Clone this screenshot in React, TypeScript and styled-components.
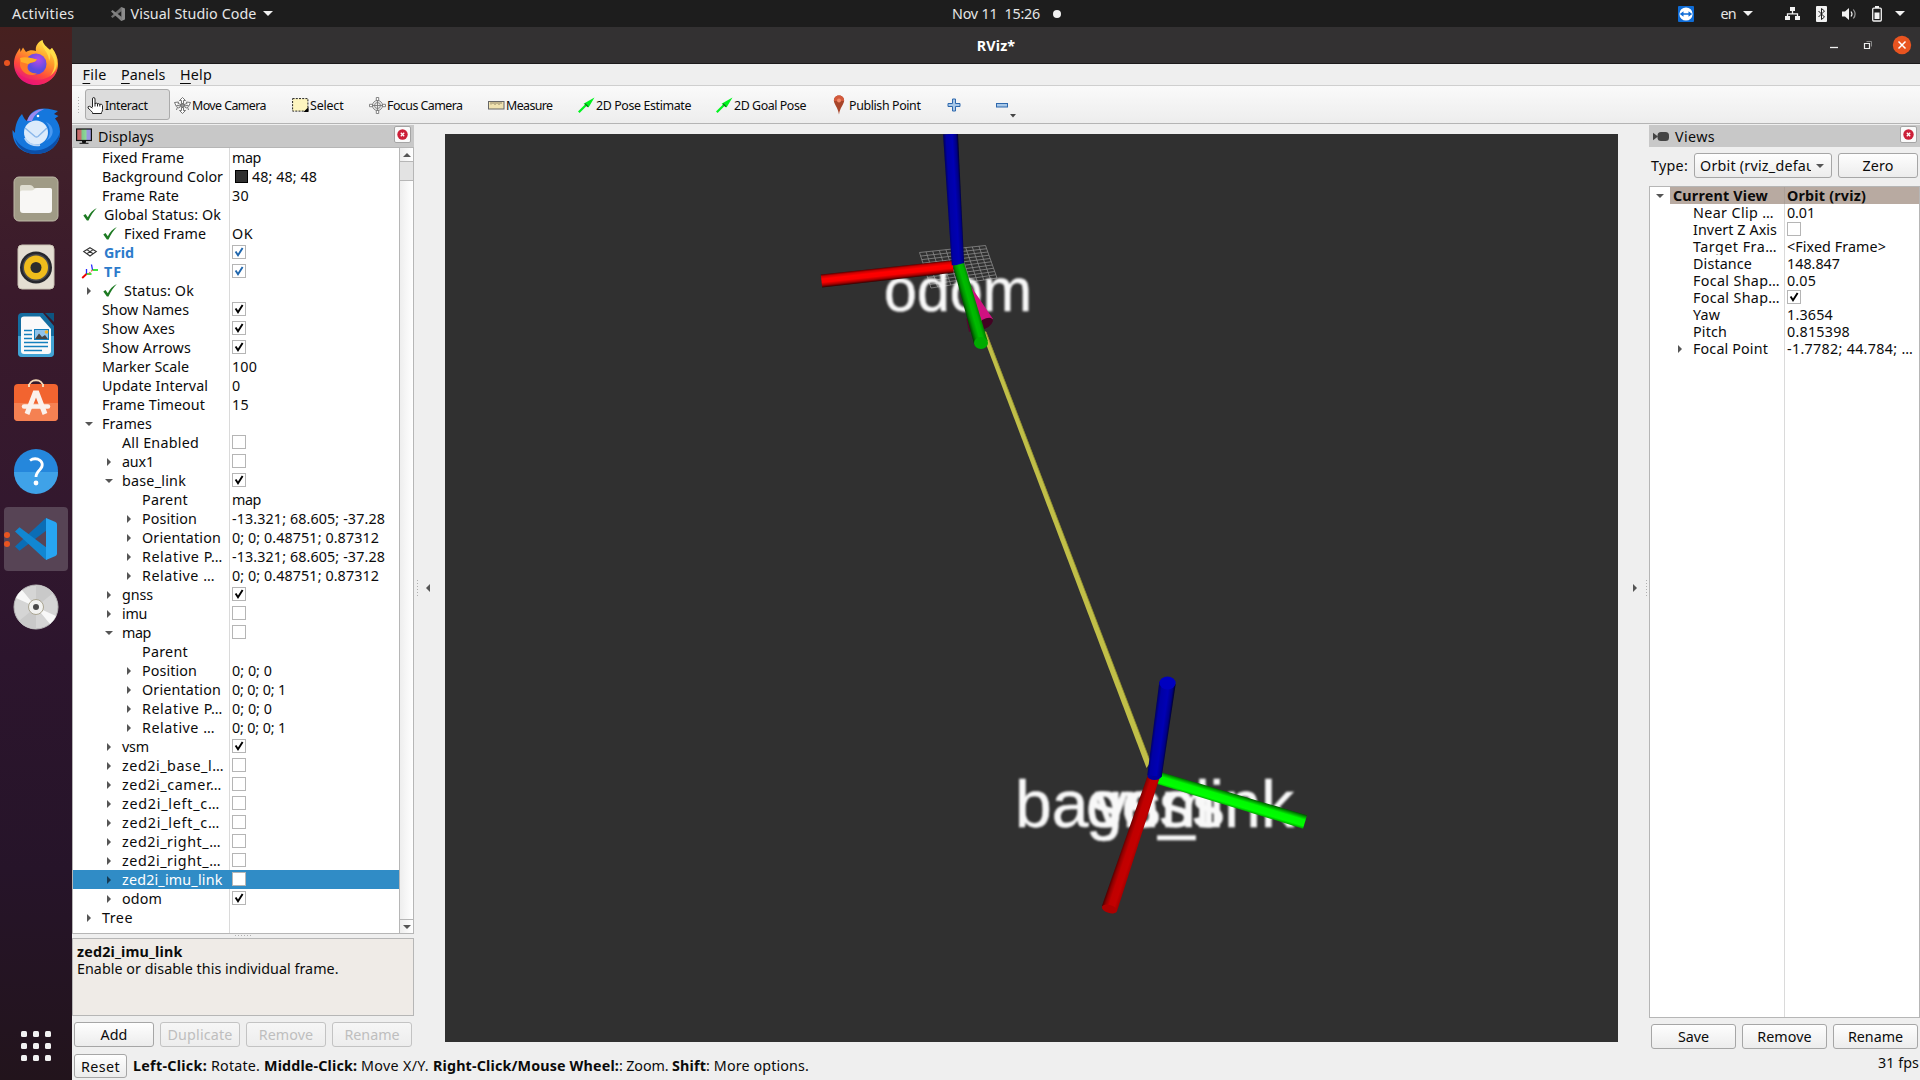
import React, { useLayoutEffect, useRef, useState } from "react";
import styled, { createGlobalStyle, css } from "styled-components";

const Global = createGlobalStyle`
  *, *::before, *::after { box-sizing: border-box; }
  body {
    margin: 0;
    overflow: hidden;
    background: #efefef;
    font-family: "Noto Sans", "Open Sans", sans-serif;
    font-size: 14.3px;
    line-height: 19px;
    color: #0b0b0b;
  }
  svg { display: block; flex: none; overflow: visible; }
`;

/* ---------- text tracked to a given advance width ---------- */
const FitSpan = styled.span<{ $bold?: boolean }>`
  display: inline-block;
  flex: none;
  white-space: pre;
  ${(p) => p.$bold && css`font-weight: 700;`}
`;

function Fit({ children, w, bold }: { children: React.ReactNode; w?: number; bold?: boolean }) {
  const ref = useRef<HTMLSpanElement>(null);
  const [spacing, setSpacing] = useState(0);
  useLayoutEffect(() => {
    const el = ref.current;
    if (!el || !w) return;
    const length = el.textContent?.length || 1;
    setSpacing((w - el.getBoundingClientRect().width) / length);
  }, [w]);
  return (
    <FitSpan ref={ref} $bold={bold} style={{ letterSpacing: spacing }}>
      {children}
    </FitSpan>
  );
}

/* ---------- desktop shell ---------- */
const Desktop = styled.div`
  width: 1920px;
  height: 1080px;
  display: flex;
  flex-direction: column;
`;
const TopBar = styled.header`
  height: 27px;
  background: #1d1d1d;
  color: #e6e6e6;
  display: grid;
  grid-template-columns: 1fr auto 1fr;
  align-items: center;
  flex: none;
`;
const TopLeft = styled.div`
  display: flex;
  align-items: center;
  padding-left: 12px;
`;
const AppMenu = styled.div`
  display: flex;
  align-items: center;
  gap: 6px;
  margin-left: 36px;
`;
const Clock = styled.div`
  display: flex;
  align-items: center;
  gap: 13px;
  margin-left: 93px;
`;
const Dot = styled.i`
  width: 8px;
  height: 8px;
  border-radius: 50%;
  background: #f2f2f2;
`;
const Tray = styled.div`
  display: flex;
  align-items: center;
  justify-content: flex-end;
  padding-right: 15px;
`;
const TrayItem = styled.div<{ $gap: number }>`
  margin-left: ${(p) => p.$gap}px;
  display: flex;
  align-items: center;
  gap: 7px;
`;
const Body = styled.div`
  flex: 1;
  display: flex;
  min-height: 0;
`;
const Dock = styled.nav`
  width: 72px;
  flex: none;
  padding-top: 4px;
  display: flex;
  flex-direction: column;
  align-items: center;
  gap: 4px;
  background: linear-gradient(#47201f 0, #40202a 12%, #3a1a2b 25%, #33182e 45%, #2c152d 60%, #261429 80%, #22141c 100%);
`;
const DockItem = styled.div<{ $active?: boolean; $dots?: number }>`
  position: relative;
  width: 64px;
  height: 64px;
  border-radius: 4px;
  display: flex;
  align-items: center;
  justify-content: center;
  background: ${(p) => (p.$active ? "#574455" : "transparent")};
`;
const Running = styled.div`
  position: absolute;
  left: 0;
  top: 0;
  height: 64px;
  display: flex;
  flex-direction: column;
  justify-content: center;
  gap: 3px;
`;
const RunDot = styled.i`
  width: 6px;
  height: 6px;
  border-radius: 50%;
  background: #e95420;
`;
const AppGrid = styled.div`
  margin-top: auto;
  margin-bottom: 19px;
  display: grid;
  grid-template-columns: repeat(3, 6px);
  grid-auto-rows: 6px;
  gap: 6px;
`;
const AppCell = styled.i`
  background: #f2f2f2;
  border-radius: 1.5px;
`;

/* ---------- window ---------- */
const Window = styled.main`
  flex: 1;
  display: flex;
  flex-direction: column;
  background: #efefef;
  min-width: 0;
`;
const TitleBar = styled.div`
  height: 37px;
  flex: none;
  background: #333132;
  border-bottom: 1px solid #1c1a1b;
  color: #fff;
  display: grid;
  grid-template-columns: 1fr auto 1fr;
  align-items: center;
`;
const WindowButtons = styled.div`
  display: flex;
  align-items: center;
  justify-content: flex-end;
  padding-right: 8px;
`;
const MenuBar = styled.div`
  height: 22px;
  flex: none;
  border-bottom: 1px solid #cfcfcf;
  display: flex;
  gap: 14.5px;
  padding-left: 10.5px;
  align-items: center;
`;
const Mnemonic = styled.u`
  text-decoration-thickness: 1px;
  text-underline-offset: 3px;
`;
const ToolBar = styled.div`
  height: 38px;
  flex: none;
  display: flex;
  align-items: center;
  padding-left: 5px;
  background: linear-gradient(#fafafa, #ededed);
  border-bottom: 1px solid #b4b4b4;
  font-size: 12.4px;
`;
const Grip = styled.div<{ $w: number; $h: number }>`
  width: ${(p) => p.$w}px;
  height: ${(p) => p.$h}px;
  flex: none;
  background-image: radial-gradient(circle, #b0b0b0 0.7px, transparent 1px);
  background-size: 3px 3px;
`;
const Tool = styled.div<{ $w: number; $on?: boolean }>`
  width: ${(p) => p.$w}px;
  height: 31px;
  display: flex;
  align-items: center;
  gap: 1px;
  padding-left: 2px;
  padding-top: 1px;
  border-radius: 3px;
  flex: none;
  ${(p) => p.$on && css`background: #dcdcdc; border: 1px solid #ababab; width: 85px; margin: 0 2px 0 4px; padding-left: 1px;`}
`;
const Workspace = styled.div`
  height: 926px;
  flex: none;
  display: flex;
  padding-top: 1px;
`;
const DockPanel = styled.section<{ $w: number }>`
  width: ${(p) => p.$w}px;
  display: flex;
  flex-direction: column;
  flex: none;
`;
const PanelHeader = styled.div`
  height: 22px;
  flex: none;
  background: #c8c8c8;
  display: flex;
  align-items: center;
  gap: 6px;
  padding: 0 3px 0 4px;
`;
const PanelClose = styled.div`
  margin-left: auto;
  margin-bottom: 3px;
  width: 17px;
  height: 17px;
  border: 1px solid #a5a5a5;
  border-radius: 2px;
  background: #fafafa;
  display: flex;
  align-items: center;
  justify-content: center;
`;
const TreeFrame = styled.div<{ $h: number }>`
  height: ${(p) => p.$h}px;
  flex: none;
  background: #fff;
  border: 1px solid #b6b6b6;
  display: flex;
  overflow: hidden;
`;
const Rows = styled.div<{ $name: number }>`
  flex: 1;
  min-width: 0;
  background: linear-gradient(#dadada, #dadada) no-repeat ${(p) => p.$name}px 0 / 1px 100%;
`;
const Row = styled.div<{ $h: number; $selected?: boolean }>`
  height: ${(p) => p.$h}px;
  display: flex;
  align-items: center;
  ${(p) => p.$selected && css`background: #308cc6; color: #fff;`}
`;
const NameCell = styled.div<{ $w: number; $x: number; $shade?: boolean }>`
  width: ${(p) => p.$w}px;
  height: 100%;
  padding-left: ${(p) => p.$x}px;
  flex: none;
  display: flex;
  align-items: center;
  overflow: hidden;
  ${(p) => p.$shade && css`background: linear-gradient(#b8aaa1, #b8aaa1) no-repeat 20px 0;`}
`;
const ValueCell = styled.div<{ $shade?: boolean }>`
  flex: 1;
  height: 100%;
  padding-left: 3px;
  display: flex;
  align-items: center;
  ${(p) => p.$shade && css`background: #b8aaa1; border-left: 1px solid #aca097; padding-left: 2px;`}
`;
const Expander = styled.span`
  width: 20px;
  margin-left: -23px;
  margin-right: 3px;
  display: flex;
  justify-content: center;
  flex: none;
`;
const RowIcon = styled.span`
  width: 22px;
  padding-left: 1px;
  margin-bottom: 1px;
  flex: none;
`;
const Blue = styled.span`
  color: #2c7bcb;
`;
const Box = styled.span`
  width: 14px;
  height: 14px;
  margin-bottom: 1px;
  border: 1px solid #b5b5b5;
  background: #fff;
  display: flex;
  align-items: center;
  justify-content: center;
`;
const Swatch = styled.span`
  width: 13px;
  height: 13px;
  margin: 0 4px 0 3px;
  background: #303030;
  border: 1px solid #000;
`;
const ScrollBar = styled.div`
  width: 14px;
  border-left: 1px solid #b6b6b6;
  background: linear-gradient(90deg, #eee, #fff);
  display: flex;
  flex-direction: column;
`;
const ScrollArrow = styled.div<{ $end?: boolean }>`
  height: 14px;
  display: flex;
  align-items: center;
  justify-content: center;
  ${(p) => (p.$end ? css`margin-top: auto; border-top: 1px solid #b6b6b6;` : css`border-bottom: 1px solid #b6b6b6;`)}
`;
const Thumb = styled.div`
  height: 19px;
  background: #e3e3e3;
  border-bottom: 1px solid #b6b6b6;
`;
const HSplit = styled.div`
  height: 4px;
  flex: none;
  display: flex;
  align-items: flex-start;
  justify-content: center;
`;
const HelpBox = styled.div`
  height: 78px;
  flex: none;
  border: 1px solid #b6b6b6;
  background: #efebe7;
  padding: 4px 4px;
  line-height: 17px;
  display: flex;
  flex-direction: column;
  align-items: flex-start;
`;
const ButtonRow = styled.div<{ $top: number }>`
  margin-top: ${(p) => p.$top}px;
  padding: 0 2px;
  display: flex;
  justify-content: space-between;
`;
const Button = styled.button<{ $w: number; $h?: number }>`
  width: ${(p) => p.$w}px;
  height: ${(p) => p.$h ?? 25}px;
  padding: 0;
  border: 1px solid #a6a6a6;
  border-radius: 3px;
  background: linear-gradient(#fefefe, #ececec);
  font: inherit;
  color: inherit;
  flex: none;
  display: flex;
  align-items: center;
  justify-content: center;
  &:disabled { color: #bebebe; border-color: #c3c3c3; background: linear-gradient(#f6f6f6, #ededed); }
`;
const VSplit = styled.div<{ $w: number; $before: number; $gap: number }>`
  width: ${(p) => p.$w}px;
  flex: none;
  display: flex;
  align-items: center;
  gap: ${(p) => p.$gap}px;
  padding-left: ${(p) => p.$before}px;
`;
const Viewport = styled.div`
  width: 1173px;
  height: 908px;
  margin-top: 9px;
  flex: none;
  background: #303030;
  overflow: hidden;
`;
const TypeRow = styled.div`
  height: 37px;
  margin-bottom: 2px;
  flex: none;
  display: flex;
  align-items: center;
  padding: 0 2px;
`;
const Select = styled.div`
  width: 138px;
  height: 25px;
  margin: 0 6px 0 auto;
  border: 1px solid #a6a6a6;
  border-radius: 3px;
  background: linear-gradient(#fefefe, #ececec);
  display: flex;
  align-items: center;
  justify-content: space-between;
  padding: 0 7px 0 5px;
`;
const SelectText = styled.span`
  width: 111px;
  overflow: hidden;
  display: flex;
`;
const StatusBar = styled.footer`
  flex: 1;
  display: flex;
  align-items: flex-start;
  padding: 4px 1px 0 2px;
`;
const Hint = styled.div`
  padding: 2px 0 0 6px;
  flex: 1;
  display: flex;
`;
const Fps = styled.div`
  margin-top: -1px;
`;

/* ---------- small icons ---------- */
const Tri = ({ dir = "down", color = "#555", w = 7, h = 4 }: { dir?: string; color?: string; w?: number; h?: number }) => {
  const d: Record<string, string> = {
    down: `M0 0H${w}L${w / 2} ${h}Z`,
    up: `M0 ${h}H${w}L${w / 2} 0Z`,
    right: `M0 0V${h}L${w} ${h / 2}Z`,
    left: `M${w} 0V${h}L0 ${h / 2}Z`,
  };
  return (
    <svg width={w} height={h}>
      <path d={d[dir]} fill={color} />
    </svg>
  );
};
const Check = ({ color = "#000" }: { color?: string }) => (
  <svg width="10" height="10" viewBox="0 0 10 10">
    <path d="M1.6 4.6 4 8.3 8.6 1" fill="none" stroke={color} strokeWidth="1.9" />
  </svg>
);
const OkMark = () => (
  <svg width="14" height="13" viewBox="0 0 14 13">
    <path d="M.3 7.400 2.500 6 4.800 9.200C7 5 9.600 2.200 13.800 0 10.400 3.600 8 7 5.500 12.600L3.900 12.600Z" fill="#1d7a22" />
  </svg>
);
const GridMark = () => (
  <svg width="14" height="10" viewBox="0 0 14 10">
    <path d="M7 .7 13.300 4.500 7 9 .7 4.500ZM3.800 2.600 10.200 6.800M10.200 2.600 3.800 6.800" fill="none" stroke="#333" strokeWidth="1.100" />
  </svg>
);
const TfMark = () => (
  <svg width="17" height="15" viewBox="0 0 17 15">
    <g fill="none" strokeWidth="1.300">
      <path d="M3.500 10V5M9.500 6 8.500 .5" stroke="#22f" />
      <path d="M3.500 10h5M9.500 6h5.500" stroke="#0d0" />
      <path d="M3.500 10-.8 14" stroke="#e00" strokeWidth="1.800" />
      <path d="m9.500 6-4.500 4.500" stroke="#e55" strokeDasharray="2 1" />
    </g>
  </svg>
);
const RedX = () => (
  <svg width="11" height="11" viewBox="0 0 11 11">
    <circle cx="5.500" cy="5.500" r="5.200" fill="#cc1f38" />
    <path d="m3.800 3.800 3.400 3.400m0-3.400L3.800 7.200" stroke="#fff" strokeWidth="1.300" />
  </svg>
);
const Monitor = () => (
  <svg width="16" height="16" viewBox="0 0 16 16">
    <defs>
      <linearGradient id="mon">
        <stop offset=".3" stopColor="#c66b6b" />
        <stop offset=".36" stopColor="#7fc78a" />
        <stop offset=".64" stopColor="#8fd79a" />
        <stop offset=".7" stopColor="#9a97e0" />
      </linearGradient>
    </defs>
    <rect x=".6" y="1" width="14.800" height="11.500" fill="url(#mon)" stroke="#111" strokeWidth="1.200" />
    <path d="M6.500 12.500h3v2h-3zM3.500 15.300h9" stroke="#111" fill="#111" />
  </svg>
);
const Camcorder = () => (
  <svg width="16" height="9" viewBox="0 0 16 9">
    <path d="M0 .8 5 4.500 0 8.200Z" fill="#444" />
    <rect x="4.500" y="0" width="11.500" height="9" rx="3.500" fill="#444" />
  </svg>
);
const VsShape = ({ size, mono }: { size: number; mono?: boolean }) => (
  <svg width={size} height={size} viewBox="0 0 42 42">
    <path d="M0 28.500 4.500 32.800 32 12V0Q31 0 29.800 1Z" fill={mono ? "#6f6f6f" : "#0b6db5"} />
    <path d="M0 13.500 4.500 9.200 32 30V42Q31 42 29.800 41Z" fill={mono ? "#828282" : "#1187d2"} />
    <path d="M31 0 40.500 4Q42 4.800 42 6.500V35.500Q42 37.200 40.500 38L31 42Z" fill={mono ? "#8c8c8c" : "#27a5f2"} />
  </svg>
);

/* ---------- toolbar icons ---------- */
const Hand = () => (
  <svg width="17" height="17" viewBox="0 0 17 17">
    <path d="M5.500 10V2q0-1.500 1.200-1.500T8 2v4.500q2-.8 2.500.3 1.700-.6 2.200.5 2.500-.6 2.800 1.200v4q0 2-1 3v1H5.500v-1Q4 13.500 1 11q-.3-2 1.500-1.700L5.500 11" fill="#fff" stroke="#222" strokeWidth="1" />
    <path d="M8 6v3.500m2.500-3v3m2.300-2.500v2.500" stroke="#222" />
  </svg>
);
const MoveCam = () => (
  <svg width="17" height="17" viewBox="0 0 17 17">
    <g fill="#fff" stroke="#666" strokeWidth=".9">
      <path d="m8.500.5 3 3h-2v3.200h-2V3.500h-2ZM8.500 16.500l3-3h-2v-3h-2v3h-2Z" />
      <path d="M.5 5.500 4.500 5 4 6.500l3 1-1 1.500-3-.8-.6 1.300ZM16.500 5.500l-4-.5.5 1.500-3 1 1 1.500 3-.8.6 1.300Z" />
      <path d="m2.500 13 1-3 1.200 1 2-1.500M14.500 13l-1-3-1.200 1-2-1.500" />
      <circle cx="8.500" cy="8.500" r="1.800" fill="#999" />
    </g>
  </svg>
);
const SelectIcon = () => (
  <svg width="17" height="14" viewBox="0 0 17 14">
    <rect x=".6" y=".6" width="15.300" height="12.500" fill="#fdf5bf" stroke="#222" strokeDasharray="2 1.200" />
    <path d="M16.500 9v5h-5Z" fill="#000" />
  </svg>
);
const Focus = () => (
  <svg width="17" height="17" viewBox="0 0 17 17">
    <g fill="#fff" stroke="#777" strokeWidth=".9">
      <path d="M7.300.5h2.400v3H7.300ZM7.300 13.500h2.400v3H7.300ZM.5 7.300h3v2.400h-3ZM13.500 7.300h3v2.400h-3Z" />
      <circle cx="8.500" cy="8.500" r="5" fill="none" />
      <circle cx="8.500" cy="8.500" r="3" fill="#eee" />
      <path d="M8.500 4v9M4 8.500h9" />
    </g>
  </svg>
);
const Ruler = () => (
  <svg width="17" height="9" viewBox="0 0 17 9">
    <rect x=".5" y=".5" width="15.500" height="7.500" fill="#f0e2b0" stroke="#666" />
    <path d="M3 1v2.500M5 1v2M7 1v3M9 1v2M11 1v3M13 1v2" stroke="#7a6f55" strokeWidth=".8" />
  </svg>
);
const GreenArrow = () => (
  <svg width="17" height="16" viewBox="0 0 17 16">
    <path d="M.8 15.200 9 7" stroke="#00f41e" strokeWidth="2.200" />
    <path d="M16.500.5 10.500 10.500 8.500 8 5.500 6.800Z" fill="#00f41e" />
    <path d="m7 6.800 3 3" stroke="#0a7a18" strokeWidth="1.400" />
  </svg>
);
const Pin = () => (
  <svg width="16" height="20" viewBox="0 0 16 20">
    <path d="M7 .5C10.500 .5 12.300 3 12.100 6 11.800 9.500 8 12.500 7 19.500 6 12.500 2.200 9.500 1.900 6 1.700 3 3.500 .5 7 .5Z" fill="#a8452a" />
    <path d="M7 .5C10.500 .5 12.300 3 12.100 6H1.900C1.700 3 3.500 .5 7 .5Z" fill="#d35a3c" />
    <circle cx="7" cy="5.500" r="2" fill="#f08a6a" />
  </svg>
);
const Plus = () => (
  <svg width="16" height="16" viewBox="0 0 16 16">
    <path d="M6.500 2h3v4.500H14v3H9.500V14h-3V9.500H2v-3h4.500Z" fill="#a8c8e8" stroke="#2e68ad" />
  </svg>
);
const Minus = () => (
  <svg width="20" height="20" viewBox="0 0 20 20">
    <rect x="3.500" y="8.500" width="11" height="3.500" fill="#a8c8e8" stroke="#2e68ad" />
    <path d="M17 19h6l-3 3.500Z" fill="#444" />
  </svg>
);

/* ---------- dock icons ---------- */
const Firefox = () => (
  <svg width="46" height="48" viewBox="0 0 46 48">
    <defs>
      <linearGradient id="ff" x1=".8" y1="0" x2=".3" y2="1">
        <stop offset="0" stopColor="#fff44f" />
        <stop offset=".4" stopColor="#ff9a2a" />
        <stop offset=".7" stopColor="#ff4a3c" />
        <stop offset="1" stopColor="#e0108a" />
      </linearGradient>
      <radialGradient id="ffp" cx=".6" cy=".3">
        <stop offset="0" stopColor="#b84ae8" />
        <stop offset="1" stopColor="#5a4de0" />
      </radialGradient>
    </defs>
    <path d="M23 46C10 46 1 36 1 24.500 1 18 4 13 7 9L7.500 13 10 8.500 13 13C16 11 20 11 23 12 22 7 25 3 29.500 1 30 6 34 8 37 11L39 9C43 14 45 19 45 25 45 37 35 46 23 46Z" fill="url(#ff)" />
    <path d="M1.500 28C4 39 12 45 23 46 34 46 43 38 44.500 29 40 37 33 41 23 41 13 41 5 36 1.500 28Z" fill="#f0146c" opacity=".55" />
    <circle cx="23" cy="25" r="10.500" fill="url(#ffp)" />
    <path d="M7 19C12 17 18 19 24 20.500 22 24 17 23 15 26 13 31 18 34.500 24 34.500 16 39 8 33 7 26Z" fill="#ff7a28" />
    <path d="M7 19C12 17 18 19 24 20.500 22 24 17 23 15 25L8 23Z" fill="#ffae28" />
    <path d="M29.500 1C27 9 36 12 36 22 38 18 37 16 37 14 43 20 43 30 37 37 46 30 46 20 39 9L37 11C34 8 30 6 29.500 1Z" fill="#ffe24a" opacity=".85" />
  </svg>
);
const Thunderbird = () => (
  <svg width="48" height="47" viewBox="0 0 48 47">
    <path d="M24 46C10 46 0 37 .5 22L3 25C3 17 6 10 10 6 12 10 13 12 15 13 17 5 24 .5 32 .5 38 .5 42 2 46 3L42 6 46.500 8 43 10.500C46.500 14 48 19 48 24 48 37 37 46 24 46Z" fill="#1577dd" />
    <path d="M3 30C8 40 18 44 28 42 38 40 46 32 48 24 48 37 37 46 24 46 13 46 5 40 3 30Z" fill="#0c4fa8" />
    <path d="M15 13C18 4 26 1 32 1 26 4 22 7 20 13Z" fill="#9a8af0" />
    <circle cx="24" cy="24.500" r="12" fill="#dcebfb" />
    <path d="M13 20 23 28.500Q24.500 29.500 26 28.500L35 20" fill="none" stroke="#89b7ea" strokeWidth="1.500" />
    <path d="M13 30C15 36 22 38 28 37" fill="none" stroke="#b9d6f6" strokeWidth="2" />
    <path d="M34 33C39 28 39 20 34 14 42 17 44 28 34 33Z" fill="#4a9af2" />
    <circle cx="26" cy="8" r="1.300" fill="#fff" />
  </svg>
);
const Files = () => (
  <svg width="46" height="46" viewBox="0 0 46 46">
    <rect x="1" y="1" width="44" height="44" rx="5" fill="#a09b86" stroke="#bdb8a6" />
    <path d="M7 14V11Q7 9 9 9H17Q19 9 20 10.500L21 12H36Q39 12 39 15V20H7Z" fill="#dfddd0" />
    <path d="M7 20V16Q7 14.500 9 14.500H18Q20 14.500 21 13.500 22 12 24 12H37Q39 12 39 14V34Q39 37 36 37H10Q7 37 7 34Z" fill="#f8f7f5" />
  </svg>
);
const Speaker = () => (
  <svg width="38" height="46" viewBox="0 0 38 46">
    <rect x="1" y="1" width="36" height="44" rx="4" fill="#e4ded2" stroke="#c9c2b4" />
    <circle cx="19" cy="23.500" r="16" fill="#26272c" />
    <circle cx="19" cy="23.500" r="13.500" fill="#4a4b50" />
    <circle cx="19" cy="23.500" r="12" fill="#f0bd1c" />
    <circle cx="19" cy="23.500" r="5.500" fill="#2d2d2d" />
  </svg>
);
const Writer = () => (
  <svg width="38" height="46" viewBox="0 0 38 46">
    <path d="M5 1H26L37 14V41Q37 45 33 45H5Q1 45 1 41V5Q1 1 5 1Z" fill="#146da0" />
    <path d="M1 24H37V41Q37 45 33 45H5Q1 45 1 41Z" fill="#42a3d4" />
    <path d="M28 1H37V10Z" fill="#0d5480" />
    <path d="M7 4.500H23L34 17V39Q34 42 31 42H7Q4 42 4 39V7Q4 4.500 7 4.500Z" fill="#fafafa" />
    <path d="M7 18.500H15M7 22.500H15M7 26.500H15M7 30.500H31M7 34.500H31M7 38.500H25" stroke="#1480bd" strokeWidth="1.600" />
    <rect x="17.500" y="17.500" width="14" height="10" fill="#8fc3ea" stroke="#1480bd" />
    <path d="M18 27 22 21.500 25 25 28 23 31 27Z" fill="#444" />
    <circle cx="29.500" cy="20" r="1.800" fill="#f3b52a" />
  </svg>
);
const Software = () => (
  <svg width="46" height="50" viewBox="0 0 46 50">
    <path d="M16 9C16 0 30 0 30 9" fill="none" stroke="#f5d9b8" strokeWidth="2" />
    <rect x="1" y="6" width="44" height="37" rx="4" fill="#f26430" />
    <path d="M1 25H45V39Q45 43 41 43H5Q1 43 1 39Z" fill="#f58152" />
    <path d="M16 9V6M30 9V6" stroke="#f5d9b8" strokeWidth="2" />
    <path d="M14 36 22 15H24L32 36" fill="none" stroke="#fbf1ec" strokeWidth="5" />
    <path d="M11 28.500H35" stroke="#fbf1ec" strokeWidth="4.500" strokeLinecap="round" />
  </svg>
);
const Help = () => (
  <svg width="46" height="46" viewBox="0 0 46 46">
    <circle cx="23" cy="23" r="22" fill="#2587dc" />
    <path d="M1 24H45A22 22 0 0 1 1 24Z" fill="#3fa2e8" />
    <path d="M17 12.500C19 11 22 10.300 25 11.200 30 13 30.500 18 27 21.500 24.500 24 23 25.500 23 29" fill="none" stroke="#fff" strokeWidth="2.800" />
    <circle cx="23" cy="35" r="2.400" fill="#fff" />
  </svg>
);
const Disc = () => (
  <svg width="46" height="46" viewBox="0 0 46 46">
    <circle cx="23" cy="23" r="22" fill="#d5d5d5" stroke="#b9b9b9" />
    <path d="M23 23 3 14A22 22 0 0 1 9 6ZM23 23 43 32A22 22 0 0 1 37 40Z" fill="#f8f8f8" />
    <path d="M23 23 23 1A22 22 0 0 1 40 9ZM23 23 23 45A22 22 0 0 1 6 37Z" fill="#c9c9c9" />
    <circle cx="23" cy="23" r="7.500" fill="#f2f2f0" stroke="#aaa592" />
    <circle cx="23" cy="23" r="3" fill="#4a4a4a" />
  </svg>
);

/* ---------- tray ---------- */
const TeamViewer = () => (
  <svg width="16" height="16" viewBox="0 0 16 16">
    <rect width="16" height="16" rx="1" fill="#0f6cd6" />
    <circle cx="8" cy="8" r="6.600" fill="#fff" />
    <path d="M1.800 8 5.500 5.300V7.200h5V5.300L14.200 8l-3.700 2.700V8.800h-5v1.900Z" fill="#0f6cd6" />
  </svg>
);
const Network = () => (
  <svg width="15" height="14" viewBox="0 0 15 14">
    <path d="M5 0h5v4H5ZM0 9h5v4H0ZM10 9h5v4h-5Z" fill="#f2f2f2" />
    <path d="M7.500 4v3M2.500 9V6.800h10V9" fill="none" stroke="#f2f2f2" strokeWidth="1.300" />
  </svg>
);
const Bluetooth = () => (
  <svg width="11" height="16" viewBox="0 0 11 16">
    <rect width="11" height="16" rx="1" fill="#f2f2f2" />
    <path d="m2.500 5 6 6-3 2.500v-11l3 2.500-6 6" fill="none" stroke="#1d1d1d" />
  </svg>
);
const Volume = () => (
  <svg width="15" height="14" viewBox="0 0 15 14">
    <path d="M0 4.500h3L7 1v12L3 9.500H0Z" fill="#f2f2f2" />
    <path d="M9 4.500q2 2.500 0 5" fill="none" stroke="#f2f2f2" strokeWidth="1.200" />
    <path d="M11.300 2.500q3.600 4.500 0 9" fill="none" stroke="#9a9a9a" strokeWidth="1.200" />
  </svg>
);
const Battery = () => (
  <svg width="10" height="16" viewBox="0 0 10 16">
    <path d="M3 0h4v2H3Z" fill="#f2f2f2" />
    <rect x=".7" y="2.200" width="8.600" height="12.800" rx="1" fill="none" stroke="#f2f2f2" strokeWidth="1.300" />
    <rect x="2.500" y="6.500" width="5" height="6.500" fill="#f2f2f2" />
  </svg>
);
const WinControls = () => (
  <svg width="82" height="20" viewBox="0 0 82 20">
    <path d="M0 12.500h8" stroke="#f0f0f0" strokeWidth="1.300" />
    <path d="M34.500 8.500h5v5h-5Z" fill="none" stroke="#eee" strokeWidth="1.200" />
    <path d="M36.500 6.500h5v5" fill="none" stroke="#888" />
    <circle cx="72" cy="10" r="9.200" fill="#e95420" />
    <path d="m68.500 6.500 7 7m0-7-7 7" stroke="#fff" strokeWidth="1.500" />
  </svg>
);

/* ---------- 3D scene ---------- */
type P = [number, number];
const Rod = ({ a, b, wa, wb, fill }: { a: P; b: P; wa: number; wb: number; fill: string }) => {
  const len = Math.hypot(b[0] - a[0], b[1] - a[1]);
  const ang = (Math.atan2(b[1] - a[1], b[0] - a[0]) * 180) / Math.PI;
  return (
    <g transform={`translate(${a[0]} ${a[1]}) rotate(${ang})`}>
      <polygon points={`0,${-wa / 2} ${len},${-wb / 2} ${len},${wb / 2} 0,${wa / 2}`} fill={`url(#${fill})`} />
    </g>
  );
};
const Shade = ({ id, stops }: { id: string; stops: [number, string][] }) => (
  <linearGradient id={id} x1="0" y1="0" x2="0" y2="1">
    {stops.map(([o, c]) => (
      <stop key={o} offset={o} stopColor={c} />
    ))}
  </linearGradient>
);
const gridCorners: P[] = [[919.5, 252.500], [985.500, 245.500], [997, 278], [931, 288]];
const lerp = (p: P, q: P, t: number): P => [p[0] + (q[0] - p[0]) * t, p[1] + (q[1] - p[1]) * t];
const gridPath = Array.from({ length: 11 }, (_, i) => {
  const t = i / 10;
  const [tl, tr, br, bl] = gridCorners;
  const [a, b, c, d] = [lerp(tl, tr, t), lerp(bl, br, t), lerp(tl, bl, t), lerp(tr, br, t)];
  return `M${a}L${b}M${c}L${d}`;
}).join("");

const Scene = () => (
  <svg width="1173" height="908" viewBox="445 134 1173 908">
    <defs>
      <Shade id="blue" stops={[[0, "#000058"], [0.2, "#0000a4"], [0.6, "#0000b4"], [0.85, "#000084"], [1, "#000028"]]} />
      <Shade id="red" stops={[[0, "#300000"], [0.18, "#a80000"], [0.38, "#f80000"], [0.65, "#ff0000"], [0.85, "#c80000"], [1, "#500000"]]} />
      <Shade id="redB" stops={[[0, "#a00000"], [0.25, "#c40000"], [0.6, "#c00000"], [0.82, "#900000"], [1, "#480000"]]} />
      <Shade id="green" stops={[[0, "#007800"], [0.25, "#00b400"], [0.5, "#00bc00"], [0.75, "#009000"], [1, "#003800"]]} />
      <Shade id="greenB" stops={[[0, "#005000"], [0.18, "#00a800"], [0.36, "#00f800"], [0.8, "#00ff00"], [1, "#00a000"]]} />
      <filter id="soft" x="-5%" y="-20%" width="110%" height="140%">
        <feGaussianBlur stdDeviation=".8" />
      </filter>
    </defs>
    <path d={gridPath} stroke="#8a8a8a" strokeWidth=".8" fill="none" />
    <g fill="#f8f8f8" stroke="#f8f8f8" strokeWidth=".5" fontFamily="Liberation Sans, Arial, sans-serif" filter="url(#soft)">
      <text x="884" y="311" fontSize="61" textLength="148" lengthAdjust="spacingAndGlyphs">odom</text>
      <g fontSize="66">
        <text x="1015" y="827" textLength="279" lengthAdjust="spacingAndGlyphs">base_link</text>
        <text x="1086" y="827" textLength="139" lengthAdjust="spacingAndGlyphs">gnss</text>
        <text x="1095" y="827" textLength="121" lengthAdjust="spacingAndGlyphs">vsm</text>
      </g>
    </g>
    <path d="M970 285 993 319 980 321Z" fill="#cf1180" />
    <path d="M966 318 969 332 980 327Z" fill="#55052f" />
    <path d="M980 330 982 320Q992 315 993 321 991 328 980 330Z" fill="#430223" />
    <path d="M981.500 332 986 331.500 1150.500 762 1146.500 768Z" fill="#c1bf48" />
    <path d="M986 332 1150.500 762" stroke="#8e8c2c" strokeWidth=".8" fill="none" />
    <Rod a={[953, 266.500]} b={[821.500, 281]} wa={12.500} wb={13} fill="red" />
    <Rod a={[958, 265]} b={[950.500, 134]} wa={12.500} wb={15} fill="blue" />
    <Rod a={[958.500, 264.500]} b={[981, 343]} wa={11.500} wb={14} fill="green" />
    <ellipse cx="981" cy="343" rx="7" ry="6" fill="#00aa00" />
    <Rod a={[1159, 778]} b={[1305, 822]} wa={12.500} wb={14} fill="greenB" />
    <Rod a={[1153.500, 777]} b={[1109.500, 908.500]} wa={12} wb={16} fill="redB" />
    <ellipse cx="1109.500" cy="909" rx="7.800" ry="4" transform="rotate(16 1109.5 909)" fill="#ae0000" />
    <ellipse cx="1154.500" cy="776" rx="7" ry="4" fill="#00009c" />
    <Rod a={[1154.500, 776]} b={[1167.500, 683]} wa={14.500} wb={16.500} fill="blue" />
    <ellipse cx="1167.500" cy="683" rx="8.200" ry="6.500" fill="#0000c0" />
  </svg>
);

/* ---------- property trees ---------- */
interface Prop {
  level: number;
  name: string;
  w: number;
  value?: string;
  vw?: number;
  check?: boolean;
  open?: boolean;
  icon?: "ok" | "grid" | "tf";
  blue?: boolean;
  bold?: boolean;
  swatch?: boolean;
  selected?: boolean;
}
const pose = (a: string, aw: number, b: string, bw: number): Prop[] => [
  { level: 3, name: "Position", w: 55, value: a, vw: aw, open: false },
  { level: 3, name: "Orientation", w: 79, value: b, vw: bw, open: false },
  { level: 3, name: "Relative P…", w: 81, value: a, vw: aw, open: false },
  { level: 3, name: "Relative …", w: 73, value: b, vw: bw, open: false },
];
const displays: Prop[] = [
  { level: 1, name: "Fixed Frame", w: 82, value: "map", vw: 29 },
  { level: 1, name: "Background Color", w: 121, value: "48; 48; 48", vw: 65, swatch: true },
  { level: 1, name: "Frame Rate", w: 77, value: "30", vw: 17 },
  { level: 0, name: "Global Status: Ok", w: 117, icon: "ok" },
  { level: 1, name: "Fixed Frame", w: 82, value: "OK", vw: 21, icon: "ok" },
  { level: 0, name: "Grid", w: 30, icon: "grid", blue: true, check: true },
  { level: 0, name: "TF", w: 18, icon: "tf", blue: true, check: true },
  { level: 1, name: "Status: Ok", w: 70, icon: "ok", open: false },
  { level: 1, name: "Show Names", w: 87, check: true },
  { level: 1, name: "Show Axes", w: 73, check: true },
  { level: 1, name: "Show Arrows", w: 89, check: true },
  { level: 1, name: "Marker Scale", w: 87, value: "100", vw: 25 },
  { level: 1, name: "Update Interval", w: 106, value: "0", vw: 8.500 },
  { level: 1, name: "Frame Timeout", w: 103, value: "15", vw: 17 },
  { level: 1, name: "Frames", w: 50, open: true },
  { level: 2, name: "All Enabled", w: 77, check: false },
  { level: 2, name: "aux1", w: 32, check: false, open: false },
  { level: 2, name: "base_link", w: 64, check: true, open: true },
  { level: 3, name: "Parent", w: 46, value: "map", vw: 29 },
  ...pose("-13.321; 68.605; -37.28", 153, "0; 0; 0.48751; 0.87312", 147),
  { level: 2, name: "gnss", w: 31, check: true, open: false },
  { level: 2, name: "imu", w: 25, check: false, open: false },
  { level: 2, name: "map", w: 29, check: false, open: true },
  { level: 3, name: "Parent", w: 46 },
  ...pose("0; 0; 0", 40, "0; 0; 0; 1", 54),
  { level: 2, name: "vsm", w: 27, check: true, open: false },
  { level: 2, name: "zed2i_base_l…", w: 102, check: false, open: false },
  { level: 2, name: "zed2i_camer…", w: 100, check: false, open: false },
  { level: 2, name: "zed2i_left_c…", w: 98, check: false, open: false },
  { level: 2, name: "zed2i_left_c…", w: 98, check: false, open: false },
  { level: 2, name: "zed2i_right_…", w: 99, check: false, open: false },
  { level: 2, name: "zed2i_right_…", w: 99, check: false, open: false },
  { level: 2, name: "zed2i_imu_link", w: 100.500, check: false, open: false, selected: true },
  { level: 2, name: "odom", w: 40, check: true, open: false },
  { level: 1, name: "Tree", w: 31, open: false },
];
const views: Prop[] = [
  { level: 0, name: "Current View", w: 95, value: "Orbit (rviz)", vw: 79, bold: true, open: true },
  { level: 1, name: "Near Clip …", w: 81, value: "0.01", vw: 28 },
  { level: 1, name: "Invert Z Axis", w: 84, check: false },
  { level: 1, name: "Target Fra…", w: 84, value: "<Fixed Frame>", vw: 99 },
  { level: 1, name: "Distance", w: 59, value: "148.847", vw: 53 },
  { level: 1, name: "Focal Shap…", w: 87, value: "0.05", vw: 29 },
  { level: 1, name: "Focal Shap…", w: 87, check: true },
  { level: 1, name: "Yaw", w: 27, value: "1.3654", vw: 46 },
  { level: 1, name: "Pitch", w: 34, value: "0.815398", vw: 63 },
  { level: 1, name: "Focal Point", w: 75, value: "-1.7782; 44.784; …", vw: 126, open: false },
];
const icons = { ok: <OkMark />, grid: <GridMark />, tf: <TfMark /> };

function Tree({ rows, h, nameW, base }: { rows: Prop[]; h: number; nameW: number; base: number }) {
  return (
    <Rows $name={nameW}>
      {rows.map((r, i) => (
        <Row key={i} $h={h} $selected={r.selected}>
          <NameCell $w={nameW} $x={base + r.level * 20} $shade={r.bold}>
            {r.open !== undefined && (
              <Expander>
                {r.open ? <Tri w={8} h={4} /> : <Tri dir="right" w={4} h={8} color={r.selected ? "#153a54" : "#555"} />}
              </Expander>
            )}
            {r.icon && <RowIcon>{icons[r.icon]}</RowIcon>}
            {r.blue ? <Blue><Fit w={r.w} bold>{r.name}</Fit></Blue> : <Fit w={r.w} bold={r.bold}>{r.name}</Fit>}
          </NameCell>
          <ValueCell $shade={r.bold}>
            {r.swatch && <Swatch />}
            {r.check !== undefined && <Box>{r.check && <Check color={r.blue ? "#1f66ad" : "#000"} />}</Box>}
            {r.value && <Fit w={r.vw} bold={r.bold}>{r.value}</Fit>}
          </ValueCell>
        </Row>
      ))}
    </Rows>
  );
}

const dockApps: { icon: React.ReactNode; dots?: number; active?: boolean }[] = [
  { icon: <Firefox />, dots: 1 },
  { icon: <Thunderbird /> },
  { icon: <Files /> },
  { icon: <Speaker /> },
  { icon: <Writer /> },
  { icon: <Software /> },
  { icon: <Help /> },
  { icon: <VsShape size={42} />, dots: 2, active: true },
  { icon: <Disc /> },
];
const tools: { icon: React.ReactNode; label?: string; w: number; tw?: number; on?: boolean }[] = [
  { icon: <Hand />, label: "Interact", w: 85, tw: 42.500, on: true },
  { icon: <MoveCam />, label: "Move Camera", w: 118, tw: 74 },
  { icon: <SelectIcon />, label: "Select", w: 77, tw: 33.500 },
  { icon: <Focus />, label: "Focus Camera", w: 119, tw: 75.500 },
  { icon: <Ruler />, label: "Measure", w: 90, tw: 46.500 },
  { icon: <GreenArrow />, label: "2D Pose Estimate", w: 138, tw: 95 },
  { icon: <GreenArrow />, label: "2D Goal Pose", w: 116, tw: 72 },
  { icon: <Pin />, label: "Publish Point", w: 114, tw: 71.500 },
  { icon: <Plus />, w: 47 },
  { icon: <Minus />, w: 40 },
];

export default function App() {
  return (
    <Desktop>
      <Global />
      <TopBar>
        <TopLeft>
          <Fit w={62.500}>Activities</Fit>
          <AppMenu>
            <VsShape size={14} mono />
            <Fit w={126}>Visual Studio Code</Fit>
            <Tri w={10} h={5} color="#f2f2f2" />
          </AppMenu>
        </TopLeft>
        <Clock>
          <Fit w={88}>{"Nov 11  15:26"}</Fit>
          <Dot />
        </Clock>
        <Tray>
          <TrayItem $gap={0}><TeamViewer /></TrayItem>
          <TrayItem $gap={27}><Fit w={15.500}>en</Fit><Tri w={10} h={5} color="#f2f2f2" /></TrayItem>
          <TrayItem $gap={32}><Network /></TrayItem>
          <TrayItem $gap={16}><Bluetooth /></TrayItem>
          <TrayItem $gap={15}><Volume /></TrayItem>
          <TrayItem $gap={15}><Battery /></TrayItem>
          <TrayItem $gap={13}><Tri w={10} h={5} color="#f2f2f2" /></TrayItem>
        </Tray>
      </TopBar>
      <Body>
        <Dock>
          {dockApps.map((a, i) => (
            <DockItem key={i} $active={a.active}>
              {a.icon}
              <Running>{Array.from({ length: a.dots ?? 0 }, (_, k) => <RunDot key={k} />)}</Running>
            </DockItem>
          ))}
          <AppGrid>{Array.from({ length: 9 }, (_, i) => <AppCell key={i} />)}</AppGrid>
        </Dock>
        <Window>
          <TitleBar>
            <span />
            <Fit w={38.500} bold>RViz*</Fit>
            <WindowButtons><WinControls /></WindowButtons>
          </TitleBar>
          <MenuBar>
            <Fit w={24}><Mnemonic>F</Mnemonic>ile</Fit>
            <Fit w={44.500}><Mnemonic>P</Mnemonic>anels</Fit>
            <Fit w={32}><Mnemonic>H</Mnemonic>elp</Fit>
          </MenuBar>
          <ToolBar>
            <Grip $w={4} $h={18} />
            {tools.map((t, i) => (
              <Tool key={i} $w={t.w} $on={t.on}>
                {t.icon}
                {t.label && <Fit w={t.tw}>{t.label}</Fit>}
              </Tool>
            ))}
          </ToolBar>
          <Workspace>
            <DockPanel $w={342}>
              <PanelHeader>
                <Monitor />
                <Fit w={56}>Displays</Fit>
                <PanelClose><RedX /></PanelClose>
              </PanelHeader>
              <TreeFrame $h={787}>
                <Tree rows={displays} h={19} nameW={156} base={9} />
                <ScrollBar>
                  <ScrollArrow><Tri dir="up" w={8} h={4} /></ScrollArrow>
                  <Thumb />
                  <ScrollArrow $end><Tri w={8} h={4} /></ScrollArrow>
                </ScrollBar>
              </TreeFrame>
              <HSplit><Grip $w={18} $h={3} /></HSplit>
              <HelpBox>
                <Fit w={105.500} bold>zed2i_imu_link</Fit>
                <Fit w={261.500}>Enable or disable this individual frame.</Fit>
              </HelpBox>
              <ButtonRow $top={6}>
                <Button $w={80}><Fit w={27}>Add</Fit></Button>
                <Button $w={80} disabled><Fit w={65}>Duplicate</Fit></Button>
                <Button $w={80} disabled><Fit w={54.500}>Remove</Fit></Button>
                <Button $w={80} disabled><Fit w={55}>Rename</Fit></Button>
              </ButtonRow>
            </DockPanel>
            <VSplit $w={31} $before={2} $gap={7}>
              <Grip $w={3} $h={18} />
              <Tri dir="left" w={4} h={8} />
            </VSplit>
            <Viewport><Scene /></Viewport>
            <VSplit $w={31} $before={15} $gap={8}>
              <Tri dir="right" w={4} h={8} />
              <Grip $w={3} $h={18} />
            </VSplit>
            <DockPanel $w={271}>
              <PanelHeader>
                <Camcorder />
                <Fit w={40}>Views</Fit>
                <PanelClose><RedX /></PanelClose>
              </PanelHeader>
              <TypeRow>
                <Fit w={37}>Type:</Fit>
                <Select>
                  <SelectText><Fit w={129}>Orbit (rviz_default)</Fit></SelectText>
                  <Tri w={8} h={4} />
                </Select>
                <Button $w={80}><Fit w={31}>Zero</Fit></Button>
              </TypeRow>
              <TreeFrame $h={832}>
                <Tree rows={views} h={17} nameW={134} base={23} />
              </TreeFrame>
              <ButtonRow $top={6}>
                <Button $w={85}><Fit w={31}>Save</Fit></Button>
                <Button $w={85}><Fit w={54.500}>Remove</Fit></Button>
                <Button $w={85}><Fit w={55}>Rename</Fit></Button>
              </ButtonRow>
            </DockPanel>
          </Workspace>
          <StatusBar>
            <Button $w={53} $h={24}><Fit w={39}>Reset</Fit></Button>
            <Hint>
              <Fit w={78} bold>{"Left-Click: "}</Fit>
              <Fit w={53}>{"Rotate. "}</Fit>
              <Fit w={97} bold>{"Middle-Click: "}</Fit>
              <Fit w={72}>{"Move X/Y. "}</Fit>
              <Fit w={186} bold>Right-Click/Mouse Wheel:</Fit>
              <Fit w={53}>{": Zoom. "}</Fit>
              <Fit w={34} bold>Shift</Fit>
              <Fit w={103}>: More options.</Fit>
            </Hint>
            <Fps><Fit w={41}>31 fps</Fit></Fps>
          </StatusBar>
        </Window>
      </Body>
    </Desktop>
  );
}
